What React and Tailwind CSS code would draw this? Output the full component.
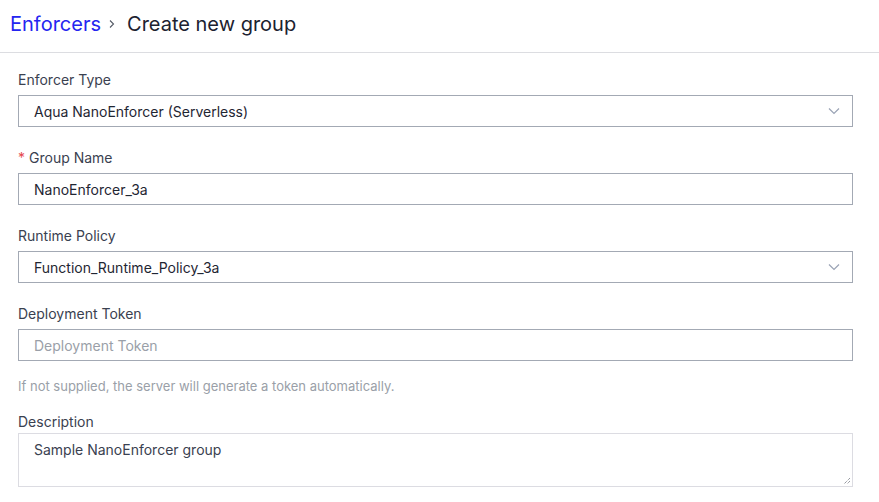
const Chevron = () => (
  <svg width="12" height="8" viewBox="0 0 12 8" fill="none" className="shrink-0">
    <path d="M1 1.5l5 5 5-5" stroke="#9aa3b5" strokeWidth="1.2" />
  </svg>
);

const Label = ({ children, required }) => (
  <div className="h-5 leading-5 text-[14px] text-[#3a4150]">
    {required && <span className="text-[#e5484d] mr-1">*</span>}
    {children}
  </div>
);

const SelectBox = ({ value }) => (
  <div className="mt-[5px] h-8 border border-[#a3a9b4] flex items-center justify-between pl-[15px] pr-[12px] text-[14px] text-[#1f2633]">
    <span>{value}</span>
    <Chevron />
  </div>
);

const TextBox = ({ value, placeholder }) => (
  <div className="mt-[5px] h-8 border border-[#a3a9b4] flex items-center pl-[15px] text-[14px]">
    {value ? (
      <span className="text-[#1f2633]">{value}</span>
    ) : (
      <span className="text-[#9a9fa8]">{placeholder}</span>
    )}
  </div>
);

export default function App() {
  return (
    <div className="w-[879px] h-[502px] bg-white overflow-hidden font-['Inter','Liberation_Sans',sans-serif]">
      <div className="h-[53px] border-b border-[#dcdde1] flex items-center pl-[10px] pb-[5px] text-[20px]">
        <span className="text-[#2525f0]">Enforcers</span>
        <svg width="8" height="10" viewBox="0 0 8 10" fill="none" className="ml-[7px] mr-[11px] mt-[1px]">
          <path d="M2 1.5l3.5 3.5L2 8.5" stroke="#555b66" strokeWidth="1.1" />
        </svg>
        <span className="text-[#1c2230]">Create new group</span>
      </div>

      <div className="pl-[18px] pr-[26px] pt-[17px]">
        <Label>Enforcer Type</Label>
        <SelectBox value="Aqua NanoEnforcer (Serverless)" />

        <div className="mt-[21px]">
          <Label required>Group Name</Label>
          <TextBox value="NanoEnforcer_3a" />
        </div>

        <div className="mt-[21px]">
          <Label>Runtime Policy</Label>
          <SelectBox value="Function_Runtime_Policy_3a" />
        </div>

        <div className="mt-[21px]">
          <Label>Deployment Token</Label>
          <TextBox placeholder="Deployment Token" />
        </div>

        <div className="mt-[17px] text-[13px] leading-4 text-[#9a9fa8]">
          If not supplied, the server will generate a token automatically.
        </div>

        <div className="mt-[18px]">
          <Label>Description</Label>
          <div className="relative mt-[1px] h-[54px] border border-[#dcdce2] pl-[15px] pt-[5px] text-[14px] text-[#3a4150]">
            Sample NanoEnforcer group
            <svg width="8" height="8" viewBox="0 0 8 8" className="absolute right-[1px] bottom-[1px]">
              <path d="M7 1L1 7M7 4L4 7" stroke="#6b6f78" strokeWidth="1" strokeDasharray="1 1" />
            </svg>
          </div>
        </div>
      </div>
    </div>
  );
}
